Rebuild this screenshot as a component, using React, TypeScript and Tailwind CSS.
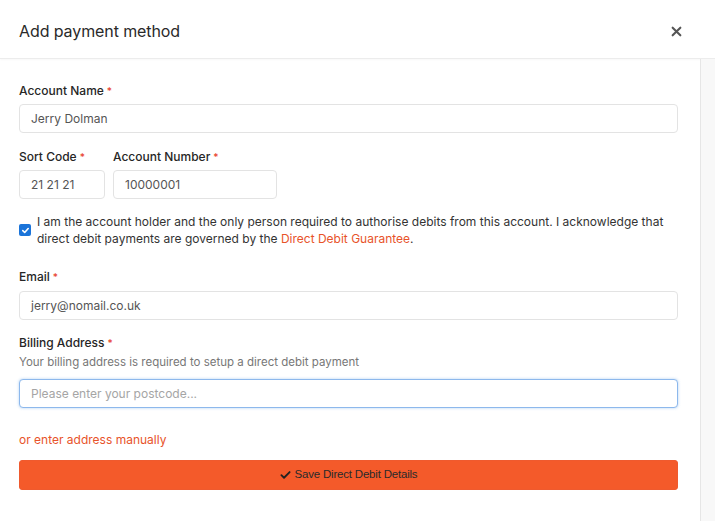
import React from 'react';

function Req() {
  return <span className="ml-[3px] text-[10px] text-[#e8412c]">*</span>;
}

function Field({ value, className = '' }: { value: string; className?: string }) {
  return (
    <div
      className={`flex h-[29px] w-full items-center rounded-[4px] border border-[#e3e3e3] bg-white px-[11px] text-[12px] text-[#555] ${className}`}
    >
      {value}
    </div>
  );
}

export default function App() {
  return (
    <div
      className="flex h-[521px] w-[715px] flex-col overflow-hidden bg-white text-[#222]"
      style={{ fontFamily: 'Inter, "Noto Sans", sans-serif' }}
    >
      <div className="flex h-[59px] shrink-0 items-center justify-between border-b border-[#ececec] pl-[19px] pr-[33px] pt-[3px] shadow-[0_1px_2px_rgba(0,0,0,0.03)]">
        <h2 className="text-[16px] font-normal tracking-[-0.1px] text-[#2a2a2a]">Add payment method</h2>
        <svg width="11" height="11" viewBox="0 0 10 10" className="mt-[2px]">
          <path d="M1.5 1.5 L8.5 8.5 M8.5 1.5 L1.5 8.5" stroke="#555" strokeWidth="1.9" strokeLinecap="round" />
        </svg>
      </div>

      <div className="flex flex-1">
        <div className="flex-1 pl-[19px] pr-[22px] pt-[24px]">
          <div className="h-[16px] text-[12px] font-medium leading-[16px] text-[#262626]">
            Account Name<Req />
          </div>
          <Field value="Jerry Dolman" className="mt-[5px] h-[28px]" />

          <div className="mt-[16px] flex gap-[8px]">
            <div className="w-[86px] shrink-0">
              <div className="h-[16px] text-[12px] font-medium leading-[16px] text-[#262626]">
                Sort Code<Req />
              </div>
              <Field value="21 21 21" className="mt-[5px]" />
            </div>
            <div className="w-[164px] shrink-0">
              <div className="h-[16px] text-[12px] font-medium leading-[16px] text-[#262626]">
                Account Number<Req />
              </div>
              <Field value="10000001" className="mt-[5px]" />
            </div>
          </div>

          <div className="mt-[14px] flex gap-[6px]">
            <div className="mt-[11px] flex h-[12px] w-[12px] shrink-0 items-center justify-center rounded-[2px] bg-[#1b74d9]">
              <svg width="9" height="9" viewBox="0 0 10 10">
                <path d="M2 5.2 L4.1 7.2 L8 2.8" fill="none" stroke="white" strokeWidth="1.8" strokeLinecap="round" strokeLinejoin="round" />
              </svg>
            </div>
            <p className="text-[12px] leading-[17px] text-[#333]">
              I am the account holder and the only person required to authorise debits from this account. I acknowledge that
              direct debit payments are governed by the{' '}
              <span className="text-[#e8532a]">Direct Debit Guarantee</span>.
            </p>
          </div>

          <div className="mt-[22px] h-[16px] text-[12px] font-medium leading-[16px] text-[#262626]">
            Email<Req />
          </div>
          <Field value="jerry@nomail.co.uk" className="mt-[6px]" />

          <div className="mt-[15px] h-[16px] text-[12px] font-medium leading-[16px] text-[#262626]">
            Billing Address<Req />
          </div>
          <div className="mt-[3px] h-[16px] text-[11.5px] leading-[16px] text-[#777]">
            Your billing address is required to setup a direct debit payment
          </div>
          <div className="mt-[9px] flex h-[29px] items-center rounded-[4px] border border-[#8db8ec] bg-white px-[11px] text-[12px] text-[#a5a5a5] shadow-[0_0_3px_rgba(80,150,230,0.45)]">
            Please enter your postcode...
          </div>

          <div className="mt-[24px] h-[16px] text-[12px] leading-[16px] text-[#e8532a]">or enter address manually</div>

          <button
            type="button"
            className="mt-[12px] flex h-[30px] w-full items-center justify-center gap-[4px] rounded-[3px] border border-[#ef5a2e] bg-[#f45a2a] text-[11.5px] text-[#2a2a2a]"
            style={{ fontFamily: '"Liberation Sans", Arial, sans-serif' }}
          >
            <svg width="11" height="10" viewBox="0 0 12 10">
              <path d="M1.5 5.2 L4.4 8 L10.5 1.8" fill="none" stroke="#222" strokeWidth="2" strokeLinecap="round" strokeLinejoin="round" />
            </svg>
            <span className="tracking-[-0.2px]">Save Direct Debit Details</span>
          </button>
        </div>
        <div className="w-[15px] shrink-0 border-l border-[#e6e6e6] bg-[#f8f8f8]" />
      </div>
    </div>
  );
}
